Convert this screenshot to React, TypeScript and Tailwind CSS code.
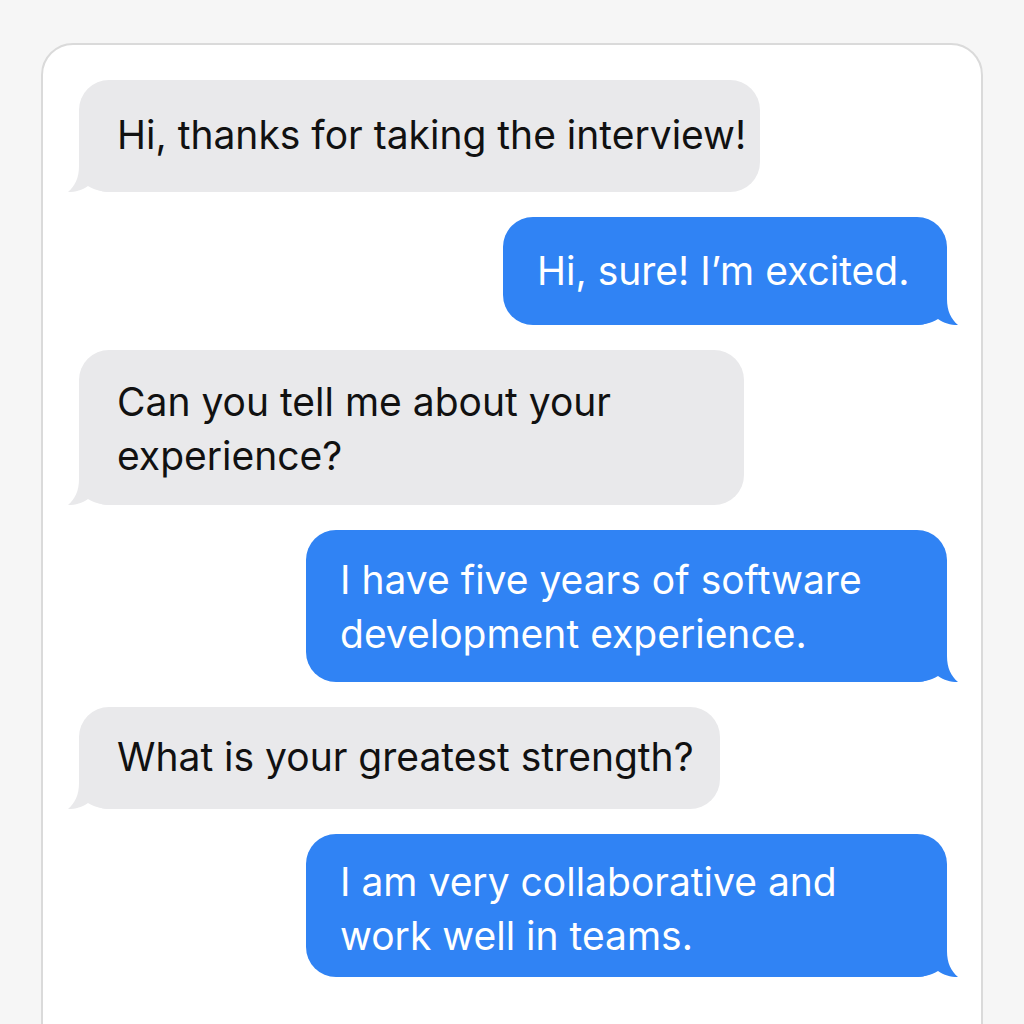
const messages = [
  { from: "them", text: "Hi, thanks for taking the interview!", w: "w-[681px]", pad: "pt-[28px] pb-[30px]" },
  { from: "me", text: "Hi, sure! I’m excited.", w: "w-[444px]", pad: "pt-[27px] pb-[27px]" },
  { from: "them", text: "Can you tell me about your experience?", w: "w-[665px]", pad: "pt-[25px] pb-[22px]" },
  { from: "me", text: "I have five years of software development experience.", w: "w-[641px]", pad: "pt-[23px] pb-[21px]" },
  { from: "them", text: "What is your greatest strength?", w: "w-[641px]", pad: "pt-[23px] pb-[25px]" },
  { from: "me", text: "I am very collaborative and work well in teams.", w: "w-[641px]", pad: "pt-[21px] pb-[14px]" },
];

function Tail({ mine }: { mine: boolean }) {
  return (
    <svg
      width="45"
      height="36"
      viewBox="0 0 45 36"
      className={`absolute bottom-0 ${mine ? "-right-[11px] -scale-x-100 fill-[#3083f4]" : "-left-[11px] fill-[#e9e9eb]"}`}>
      <path d="M11 0 L11 10 C11 22 7 30 0 36 C8 36 14 34 20 30 C27 34 34 36 45 36 L45 0 Z" />
    </svg>
  );
}

export default function App() {
  return (
    <div className="h-[1024px] overflow-hidden bg-[#f6f6f6] px-[41px] pt-[43px] font-['Inter','Noto_Sans',sans-serif]">
      <div className="h-[1100px] rounded-[32px] border-2 border-[#dadada] bg-white pl-[36px] pr-[34px] pt-[35px]">
        <div className="flex flex-col gap-[25px]">
          {messages.map((m, i) => {
            const mine = m.from === "me";
            return (
              <div key={i} className={`flex ${mine ? "justify-end" : "justify-start"}`}>
                <div
                  className={`relative ${m.w} ${m.pad} rounded-[30px] text-[39px] leading-[54px] ${
                    mine ? "bg-[#3083f4] pl-[34px] pr-[26px] text-white" : "bg-[#e9e9eb] pl-[38px] pr-[10px] text-[#111111]"
                  }`}>
                  <Tail mine={mine} />
                  <span className="relative">{m.text}</span>
                </div>
              </div>
            );
          })}
        </div>
      </div>
    </div>
  );
}
